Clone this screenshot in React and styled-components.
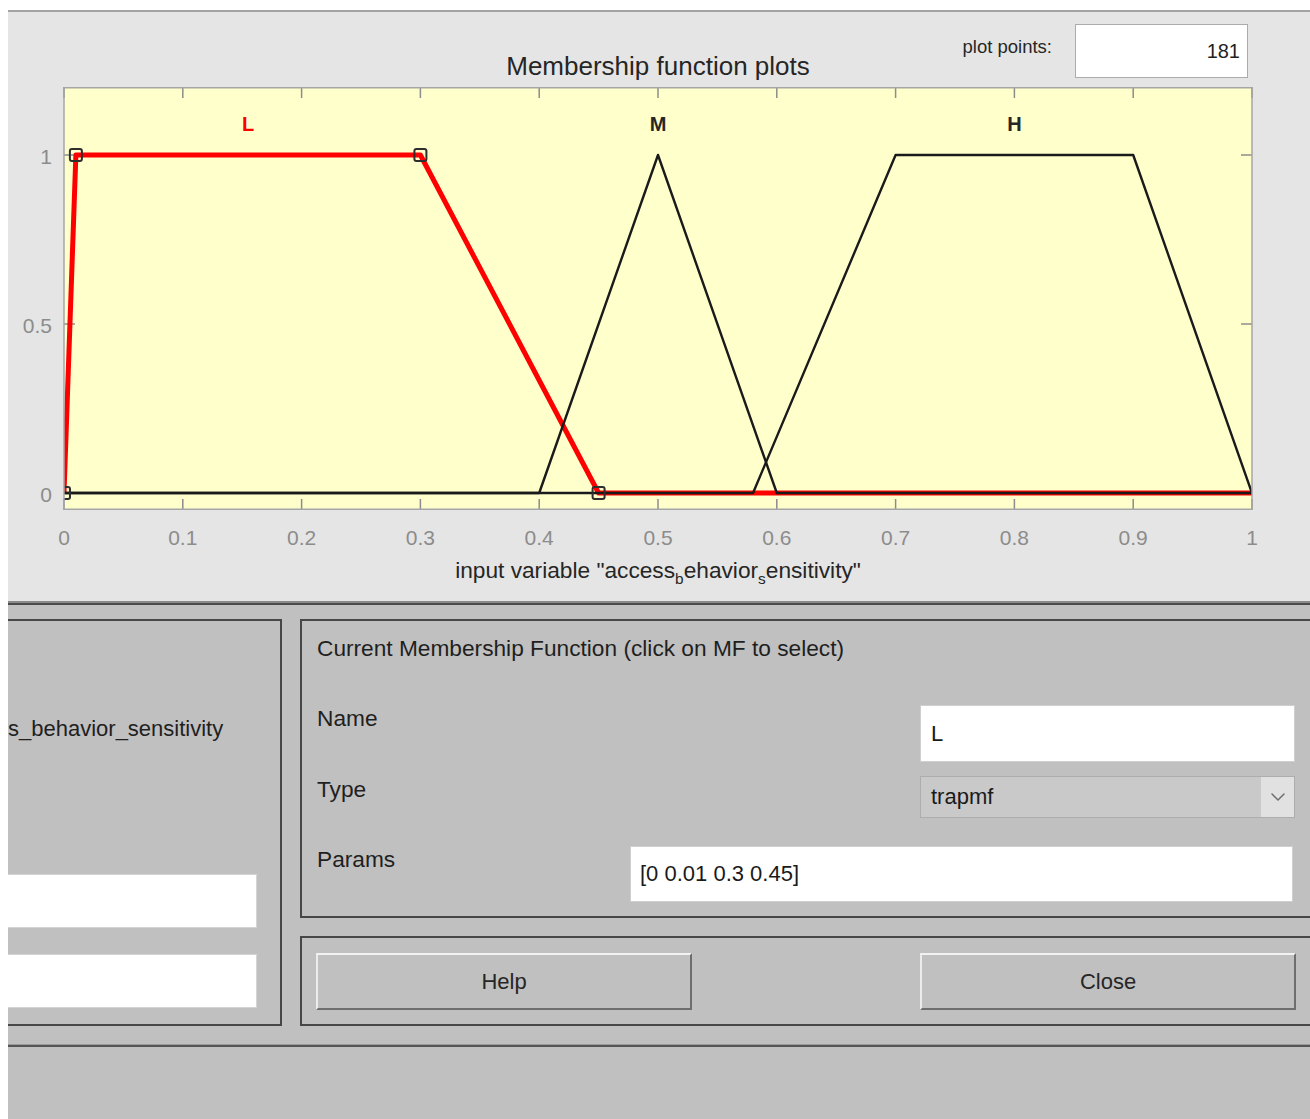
import styled, { createGlobalStyle } from "styled-components";
import { ChevronDown } from "lucide-react";

const GlobalStyle = createGlobalStyle`
  html, body {
    margin: 0;
    padding: 0;
    background: #ffffff;
  }
  body {
    font-family: "Liberation Sans", Arial, sans-serif;
    color: #1f1f1f;
  }
  * {
    box-sizing: border-box;
  }
`;

const Screen = styled.div`
  width: 1310px;
  height: 1119px;
  overflow: hidden;
  background: #ffffff;
  padding: 10px 0 0 8px;
`;

const Window = styled.div`
  height: 100%;
  border-top: 2px solid #a3a3a3;
  background: #c0c0c0;
  display: flex;
  flex-direction: column;
  overflow: hidden;
`;

/* ---------- plot area ---------- */

const PlotPane = styled.section`
  background: #e5e5e5;
  height: 591px;
  border-bottom: 2px solid #8a8a8a;
`;

const Header = styled.div`
  margin-left: 56px;
  width: 1188px;
  height: 75px;
  display: grid;
  grid-template-columns: 1fr auto 1fr;
`;

const Title = styled.h2`
  grid-column: 2;
  align-self: end;
  margin: 0 0 6px;
  font-size: 26px;
  line-height: 30px;
  font-weight: 400;
  color: #262626;
  white-space: nowrap;
`;

const PointsGroup = styled.div`
  grid-column: 3;
  justify-self: end;
  align-self: start;
  margin: 12px 4px 0 0;
  display: flex;
  align-items: flex-start;
  gap: 23px;
`;

const PointsLabel = styled.span`
  margin-top: 12px;
  font-size: 18.5px;
  line-height: 22px;
  color: #262626;
  white-space: nowrap;
`;

const PointsBox = styled.div`
  width: 173px;
  height: 54px;
  background: #ffffff;
  border: 1px solid #ababab;
  padding-right: 7px;
  font-size: 20px;
  line-height: 52px;
  text-align: right;
  color: #1f1f1f;
`;

const Chart = styled.svg`
  display: block;
  width: 1302px;
  height: 469px;
`;

const AxisLabel = styled.div`
  margin-left: 56px;
  width: 1188px;
  text-align: center;
  font-size: 22.7px;
  line-height: 28px;
  color: #262626;

  sub {
    font-size: 0.68em;
    line-height: 0;
    vertical-align: -0.4em;
  }
`;

/* ---------- lower panels ---------- */

const LowerPane = styled.section`
  flex: 1;
  border-top: 2px solid #4a4a4a;
  padding-top: 14px;
  display: flex;
  flex-direction: column;
  font-size: 22.7px;
`;

const PanelGrid = styled.div`
  margin-left: -20px;
  display: grid;
  grid-template-columns: 294px 1030px;
  column-gap: 18px;
`;

const Panel = styled.div`
  border: 2px solid #474747;
  background: #c0c0c0;
`;

const VariablePanel = styled(Panel)`
  height: 407px;
  padding: 94px 23px 0 0;
  display: flex;
  flex-direction: column;
`;

const VarName = styled.div`
  padding-left: 18px;
  font-size: 22px;
  line-height: 28px;
  white-space: nowrap;
`;

const RangeInput = styled.div`
  height: 54px;
  margin-top: ${(p) => p.$top}px;
  background: #ffffff;
  border: 1px solid #d4d4d4;
`;

const RightColumn = styled.div`
  display: flex;
  flex-direction: column;
  gap: 18px;
`;

const MfPanel = styled(Panel)`
  height: 299px;
  padding: 13px 33px 0 15px;
`;

const PanelTitle = styled.div`
  line-height: 28px;
  white-space: nowrap;
`;

const Row = styled.div`
  display: flex;
  align-items: flex-start;
  margin-top: ${(p) => p.$top}px;
`;

const RowLabel = styled.span`
  margin-top: -1px;
  line-height: 28px;
`;

const Field = styled.div`
  margin-left: auto;
  margin-right: ${(p) => p.$right || 0}px;
  width: ${(p) => p.$width}px;
  height: ${(p) => p.$height}px;
  background: #ffffff;
  border: 1px solid #cfcfcf;
  padding-left: ${(p) => p.$pad || 10}px;
  display: flex;
  align-items: center;
  font-size: 22px;
  color: #1a1a1a;
  white-space: nowrap;
`;

const Select = styled.div`
  margin-left: auto;
  width: 375px;
  height: 42px;
  display: flex;
  background: #c9c9c9;
  border: 1px solid #adadad;
  font-size: 22px;
  color: #1a1a1a;
`;

const SelectValue = styled.span`
  flex: 1;
  padding-left: 10px;
  line-height: 40px;
`;

const SelectArrow = styled.span`
  width: 33px;
  display: flex;
  align-items: center;
  justify-content: center;
  background: #e1e1e1;
  color: #6e6e6e;
`;

const ButtonPanel = styled(Panel)`
  height: 90px;
  padding: 15px 0 0 14px;
  display: flex;
  gap: 228px;
`;

const Button = styled.button`
  width: 376px;
  height: 57px;
  background: #c0c0c0;
  border-style: solid;
  border-width: 2px;
  border-color: #f2f2f2 #6e6e6e #6e6e6e #ececec;
  font-family: inherit;
  font-size: 22px;
  color: #262626;
  padding: 0;
  cursor: pointer;
`;

const BottomRule = styled.div`
  margin-top: 19px;
  border-top: 2px solid #555555;
  box-shadow: 0 -1px 0 #9a9a9a;
`;

/* ---------- chart geometry ---------- */

const X0 = 56;
const AX_W = 1188;
const AX_H = 423;
const Y_ZERO = 406;
const Y_UNIT = 338;
const px = (x) => X0 + x * AX_W;
const py = (v) => Y_ZERO - v * Y_UNIT;

const mfs = [
  { name: "L", pts: [[0, 0], [0.01, 1], [0.3, 1], [0.45, 0], [1, 0]], at: 0.155, active: true },
  { name: "M", pts: [[0, 0], [0.4, 0], [0.5, 1], [0.6, 0], [1, 0]], at: 0.5 },
  { name: "H", pts: [[0, 0], [0.58, 0], [0.7, 1], [0.9, 1], [1, 0]], at: 0.8 },
];

const xTicks = Array.from({ length: 11 }, (_, i) => i / 10);
const yTicks = [0, 0.5, 1];
const toPoints = (pts) => pts.map(([x, v]) => `${px(x)},${py(v)}`).join(" ");

const MembershipChart = () => {
  const active = mfs.find((m) => m.active);
  const others = mfs.filter((m) => !m.active);
  const tickColor = "#8c8c8c";

  return (
    <Chart viewBox="0 0 1302 469">
      <defs>
        <clipPath id="axes-clip">
          <rect x={X0} y={0} width={AX_W} height={AX_H} />
        </clipPath>
      </defs>

      <rect x={X0} y={0} width={AX_W} height={AX_H} fill="#ffffcc" />

      {xTicks.map((t) => (
        <g key={t} stroke={tickColor} strokeWidth="1.5">
          <line x1={px(t)} y1={0} x2={px(t)} y2={11} />
          <line x1={px(t)} y1={AX_H} x2={px(t)} y2={AX_H - 11} />
        </g>
      ))}
      {yTicks.map((t) => (
        <g key={t} stroke={tickColor} strokeWidth="1.5">
          <line x1={X0} y1={py(t)} x2={X0 + 11} y2={py(t)} />
          <line x1={X0 + AX_W} y1={py(t)} x2={X0 + AX_W - 11} y2={py(t)} />
        </g>
      ))}

      <g clipPath="url(#axes-clip)" fill="none" strokeLinejoin="round">
        <polyline points={toPoints(active.pts)} stroke="#ff0000" strokeWidth="5" />
        {others.map((m) => (
          <polyline key={m.name} points={toPoints(m.pts)} stroke="#1a1a1a" strokeWidth="2.4" />
        ))}
        {active.pts.slice(0, 4).map(([x, v]) => (
          <rect
            key={x}
            x={px(x) - 6}
            y={py(v) - 6}
            width="12"
            height="12"
            rx="2"
            stroke="#2e2e2e"
            strokeWidth="2"
          />
        ))}
      </g>

      <rect
        x={X0}
        y={0.75}
        width={AX_W}
        height={AX_H - 1.5}
        fill="none"
        stroke="#a6a6a6"
        strokeWidth="1.5"
      />

      {mfs.map((m) => (
        <text
          key={m.name}
          x={px(m.at)}
          y={44}
          textAnchor="middle"
          fontSize="20"
          fontWeight="700"
          fill={m.active ? "#ff0000" : "#262626"}
          fontFamily="Liberation Sans, Arial, sans-serif"
        >
          {m.name}
        </text>
      ))}

      <g fontSize="21" fill="#8c8c8c" fontFamily="Liberation Sans, Arial, sans-serif">
        {xTicks.map((t) => (
          <text key={t} x={px(t)} y={458} textAnchor="middle">
            {t === 0 || t === 1 ? t : t.toFixed(1)}
          </text>
        ))}
        {yTicks.map((t) => (
          <text key={t} x={44} y={py(t) + 9} textAnchor="end">
            {t}
          </text>
        ))}
      </g>
    </Chart>
  );
};

const App = () => {
  return (
    <>
      <GlobalStyle />
      <Screen>
        <Window>
          <PlotPane>
            <Header>
              <Title>Membership function plots</Title>
              <PointsGroup>
                <PointsLabel>plot points:</PointsLabel>
                <PointsBox>181</PointsBox>
              </PointsGroup>
            </Header>
            <MembershipChart />
            <AxisLabel>
              input variable "access<sub>b</sub>ehavior<sub>s</sub>ensitivity"
            </AxisLabel>
          </PlotPane>

          <LowerPane>
            <PanelGrid>
              <VariablePanel>
                <VarName>s_behavior_sensitivity</VarName>
                <RangeInput $top={131} />
                <RangeInput $top={26} />
              </VariablePanel>

              <RightColumn>
                <MfPanel>
                  <PanelTitle>Current Membership Function (click on MF to select)</PanelTitle>
                  <Row $top={43}>
                    <RowLabel>Name</RowLabel>
                    <Field $width={375} $height={57}>L</Field>
                  </Row>
                  <Row $top={14}>
                    <RowLabel>Type</RowLabel>
                    <Select>
                      <SelectValue>trapmf</SelectValue>
                      <SelectArrow>
                        <ChevronDown size={24} strokeWidth={1.5} />
                      </SelectArrow>
                    </Select>
                  </Row>
                  <Row $top={28}>
                    <RowLabel>Params</RowLabel>
                    <Field $width={663} $height={56} $right={2} $pad={9}>
                      [0 0.01 0.3 0.45]
                    </Field>
                  </Row>
                </MfPanel>

                <ButtonPanel>
                  <Button>Help</Button>
                  <Button>Close</Button>
                </ButtonPanel>
              </RightColumn>
            </PanelGrid>
            <BottomRule />
          </LowerPane>
        </Window>
      </Screen>
    </>
  );
};

export default App;
